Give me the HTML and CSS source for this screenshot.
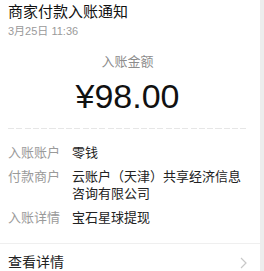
FILE: index.html
```html
<!DOCTYPE html>
<html lang="zh-CN">
<head>
<meta charset="utf-8">
<link rel="stylesheet" href="styles.css">
</head>
<body>
<div class="frame">
  <main class="page">
    <header class="header">
      <div class="title">商家付款入账通知</div>
      <div class="date">3月25日 11:36</div>
    </header>
    <section class="amount">
      <div class="amount-label">入账金额</div>
      <div class="amount-value">¥98.00</div>
    </section>
    <div class="dashed"></div>
    <section class="rows">
      <div class="row"><span class="label">入账账户</span><span class="value">零钱</span></div>
      <div class="row"><span class="label">付款商户</span><span class="value">云账户（天津）共享经济信息咨询有限公司</span></div>
      <div class="row"><span class="label">入账详情</span><span class="value">宝石星球提现</span></div>
    </section>
    <div class="divider"></div>
    <a class="more">
      <span>查看详情</span>
      <svg class="chev" width="7" height="12" viewBox="0 0 7 12"><path d="M1 1 L6 6 L1 11" fill="none" stroke="#c8c8c8" stroke-width="1.2"/></svg>
    </a>
  </main>
  <div class="track"></div>
</div>
</body>
</html>
```
FILE: styles.css
```css
html, body {
  margin: 0;
  padding: 0;
  background: #fff;
}
body {
  font-family: "Liberation Sans", "Noto Sans CJK SC", sans-serif;
  width: 264px;
  height: 271px;
  overflow: hidden;
}
.frame {
  display: flex;
  height: 271px;
}
.page {
  width: 260px;
  background: #fff;
}
.track {
  width: 4px;
  background: #ededed;
}
.header {
  padding: 2px 0 0 8px;
}
.title {
  font-size: 15px;
  line-height: 20px;
  color: #111;
}
.date {
  margin-top: 2px;
  font-size: 11px;
  line-height: 14px;
  color: #9a9a9a;
}
.amount {
  width: 239px;
  margin-left: 8px;
  text-align: center;
  padding-top: 15px;
}
.amount-label {
  font-size: 13px;
  line-height: 18px;
  color: #8c8c8c;
}
.amount-value {
  margin-top: 5px;
  font-size: 34px;
  line-height: 40px;
  color: #111;
}
.dashed {
  margin: 12px 0 0 8px;
  width: 239px;
  height: 1px;
  background: repeating-linear-gradient(to right, #e6e6e6 0 6px, transparent 6px 8.3px);
}
.rows {
  padding: 15px 0 0 8px;
}
.row {
  display: flex;
  font-size: 13px;
  line-height: 17px;
  margin-bottom: 7px;
}
.row:last-child {
  margin-bottom: 0;
}
.label {
  flex: 0 0 64px;
  color: #9a9a9a;
}
.value {
  width: 175px;
  color: #222;
}
.divider {
  margin-top: 17px;
  height: 1px;
  background: #efefef;
}
.more {
  display: flex;
  align-items: center;
  justify-content: space-between;
  margin-top: 8px;
  padding: 0 13px 0 8px;
  font-size: 14px;
  line-height: 20px;
  color: #222;
}
.chev {
  display: block;
  margin-top: 2px;
}
```
